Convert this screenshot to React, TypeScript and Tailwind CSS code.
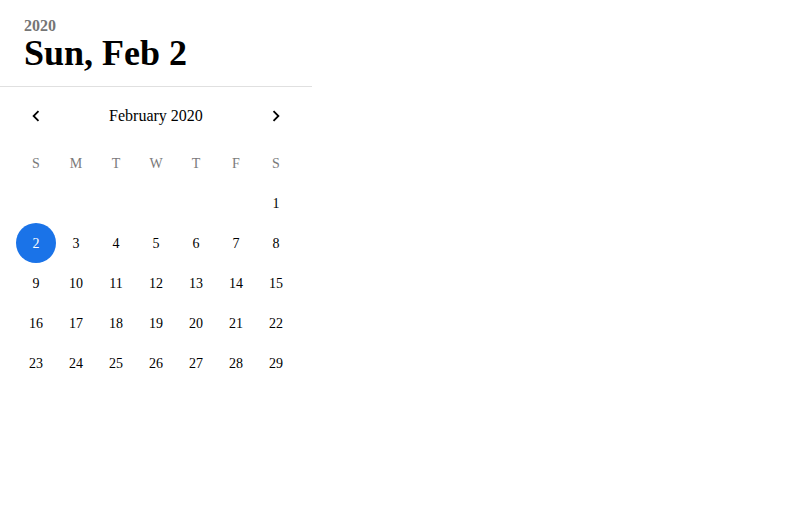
const WEEK = ["S", "M", "T", "W", "T", "F", "S"];

// Feb 2020 starts on a Saturday
const CELLS: (number | null)[] = [
  ...Array(6).fill(null),
  ...Array.from({ length: 29 }, (_, i) => i + 1),
];

const SELECTED = 2;

function Chevron({ dir }: { dir: "left" | "right" }) {
  return (
    <svg viewBox="0 0 24 24" className="w-[22px] h-[22px]" fill="currentColor">
      {dir === "left" ? (
        <path d="M15.41 7.41L14 6l-6 6 6 6 1.41-1.41L10.83 12z" />
      ) : (
        <path d="M10 6L8.59 7.41 13.17 12l-4.58 4.59L10 18l6-6z" />
      )}
    </svg>
  );
}

export default function App() {
  const rows: (number | null)[][] = [];
  for (let i = 0; i < CELLS.length; i += 7) rows.push(CELLS.slice(i, i + 7));

  return (
    <div className="w-[312px] bg-white text-black font-['Liberation_Serif',serif]">
      {/* toolbar */}
      <div className="px-6 pt-[17px] pb-[15px] border-b border-[#e0e0e0]">
        <div className="text-base leading-[18px] font-bold text-[#757575]">2020</div>
        <div className="text-4xl leading-[36px] font-bold">Sun, Feb 2</div>
      </div>

      {/* month switcher */}
      <div className="flex items-center justify-between px-4 h-14 pt-[2px]">
        <button className="w-10 h-10 flex items-center justify-center">
          <Chevron dir="left" />
        </button>
        <div className="text-base">February 2020</div>
        <button className="w-10 h-10 flex items-center justify-center">
          <Chevron dir="right" />
        </button>
      </div>

      <div className="px-4">
        <div className="grid grid-cols-7">
          {WEEK.map((d, i) => (
            <div key={i} className="h-10 pt-[2px] flex items-center justify-center text-sm text-[#7a7a7a]">
              {d}
            </div>
          ))}
        </div>
        {rows.map((row, r) => (
          <div key={r} className="grid grid-cols-7">
            {row.map((d, i) => (
              <div key={i} className="h-10 flex items-center justify-center">
                {d !== null && (
                  <span
                    className={
                      d === SELECTED
                        ? "w-10 h-10 pt-[2px] rounded-full bg-[#1a73e8] text-white text-sm flex items-center justify-center"
                        : "w-10 h-10 pt-[2px] flex items-center justify-center text-sm"
                    }
                  >
                    {d}
                  </span>
                )}
              </div>
            ))}
          </div>
        ))}
      </div>
    </div>
  );
}
